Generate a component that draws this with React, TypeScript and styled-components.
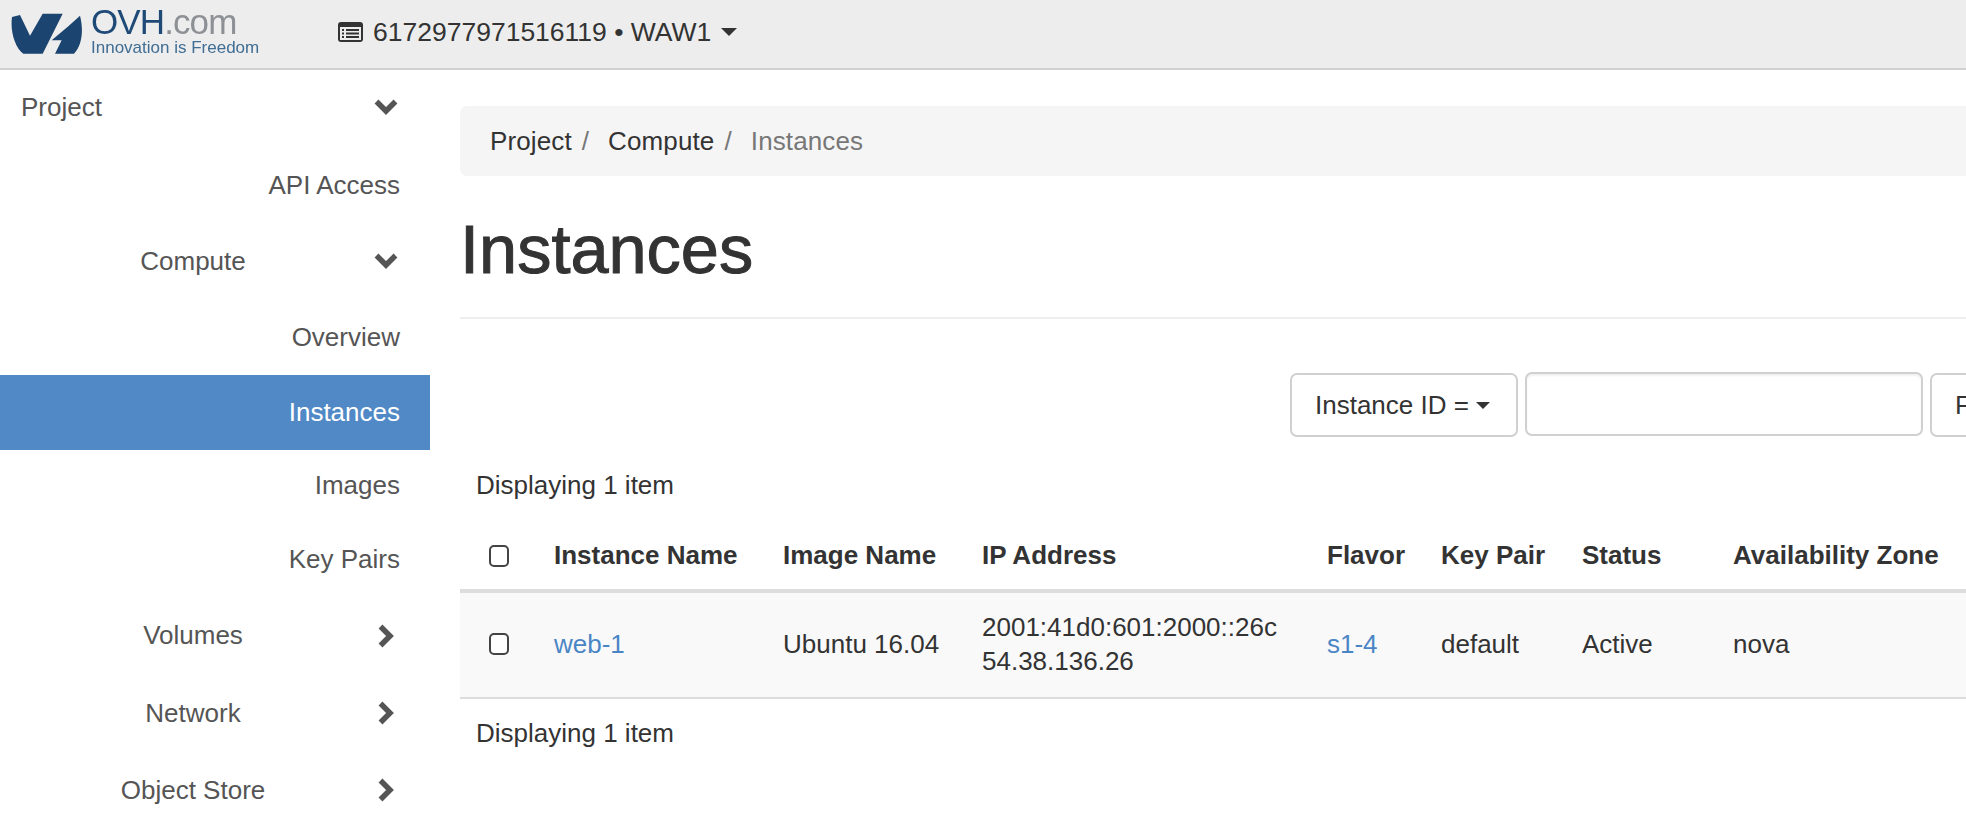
import { createGlobalStyle, styled } from 'styled-components'

const GlobalStyle = createGlobalStyle`
  html, body {
    margin: 0;
    padding: 0;
    background: #fff;
    overflow: hidden;
  }
  body {
    font-family: "Liberation Sans", Arial, sans-serif;
    font-size: 26px;
    color: #333;
  }
`

const Page = styled.div`
  width: 1966px;
  height: 828px;
  overflow: hidden;
`

const Topbar = styled.header`
  display: flex;
  align-items: center;
  height: 68px;
  background: #ededed;
  border-bottom: 2px solid #d0d0d0;
`

const Brand = styled.div`
  display: flex;
  align-items: center;
  gap: 8px;
  width: 338px;
  padding-left: 11px;
  box-sizing: border-box;
  filter: blur(0.5px);
`

const BrandText = styled.div`
  display: flex;
  flex-direction: column;
  gap: 2px;
  padding-bottom: 5px;
`

const BrandName = styled.span`
  font-size: 35px;
  line-height: 30px;
  letter-spacing: -0.9px;
  color: #8d9196;

  b {
    font-weight: 400;
    color: #1f4a78;
  }
`

const BrandTagline = styled.span`
  font-size: 17px;
  line-height: 18px;
  color: #3f6d94;
`

const ProjectPicker = styled.div`
  display: flex;
  align-items: center;
  gap: 10px;
  padding-bottom: 4px;
  font-size: 26.5px;
  color: #333;
  white-space: nowrap;
`

const Caret = styled.span<{ $size: number }>`
  display: inline-block;
  border-top: ${(p) => p.$size}px solid #333;
  border-left: ${(p) => p.$size}px solid transparent;
  border-right: ${(p) => p.$size}px solid transparent;
`

const Body = styled.div`
  display: flex;
`

const Sidebar = styled.nav`
  flex: 0 0 430px;
  display: flex;
  flex-direction: column;
`

const NavRow = styled.div<{ $height: number; $active?: boolean; $pushDown?: number }>`
  display: flex;
  align-items: center;
  justify-content: flex-end;
  box-sizing: border-box;
  height: ${(p) => p.$height}px;
  padding-top: ${(p) => p.$pushDown ?? 0}px;
  padding-right: 30px;
  color: ${(p) => (p.$active ? '#fff' : '#555')};
  background: ${(p) => (p.$active ? '#5089c6' : 'transparent')};
`

const NavGroup = styled(NavRow)`
  justify-content: flex-start;
  padding-right: 0;
`

const NavGroupLabel = styled.span`
  flex: 0 0 374px;
  box-sizing: border-box;
  padding-left: 12px;
  text-align: center;
`

const NavRootLabel = styled.span`
  flex: 0 0 374px;
  box-sizing: border-box;
  padding-left: 21px;
`

const NavIcon = styled.i`
  display: flex;
  justify-content: center;
  flex: 0 0 24px;
`

const Main = styled.main`
  flex: 0 0 1700px;
  box-sizing: border-box;
  padding: 36px 0 0 30px;
`

const Breadcrumb = styled.ol`
  display: flex;
  align-items: center;
  height: 70px;
  margin: 0;
  padding: 0 0 0 30px;
  list-style: none;
  background: #f5f5f5;
  border-radius: 7px;
`

const Crumb = styled.li<{ $current?: boolean }>`
  color: ${(p) => (p.$current ? '#777' : '#333')};
  letter-spacing: 0.12px;

  &:not(:last-child)::after {
    content: '/';
    color: #777;
    padding: 0 19px 0 10px;
  }
`

const Title = styled.h1`
  margin: 0;
  padding: 37px 0 33px 0;
  height: 143px;
  box-sizing: border-box;
  font-size: 68.5px;
  line-height: 73px;
  font-weight: 400;
  color: #333;
  -webkit-text-stroke: 1px #333;
  border-bottom: 2px solid #eee;
`

const FilterBar = styled.div`
  display: flex;
  align-items: center;
  gap: 7px;
  padding: 54px 0 0 830px;
`

const FilterButton = styled.div`
  display: flex;
  align-items: center;
  gap: 7px;
  flex: none;
  box-sizing: border-box;
  height: 64px;
  padding: 0 26px 0 23px;
  background: #fff;
  border: 2px solid #d0d0d0;
  border-radius: 7px;
  color: #333;
  white-space: nowrap;
`

const FilterInput = styled.input`
  flex: none;
  box-sizing: border-box;
  width: 398px;
  height: 64px;
  margin: -3px 0 0;
  padding: 0;
  background: #fff;
  border: 2px solid #d0d0d0;
  border-radius: 7px;
  box-shadow: inset 0 2px 2px rgba(0, 0, 0, 0.06);
`

const ItemCount = styled.div<{ $top: number }>`
  margin-top: ${(p) => p.$top}px;
  padding: 0 16px;
  line-height: 37px;
`

const Table = styled.table`
  width: 100%;
  table-layout: fixed;
  border-collapse: collapse;
`

const HeadCell = styled.th<{ $width?: number }>`
  box-sizing: border-box;
  width: ${(p) => (p.$width ? `${p.$width}px` : 'auto')};
  height: 87px;
  padding: 18px 16px 0;
  text-align: left;
  font-weight: 700;
  color: #333;
  white-space: nowrap;
  border-bottom: 4px solid #ddd;
`

const Row = styled.tr`
  background: #f9f9f9;
`

const Cell = styled.td`
  box-sizing: border-box;
  height: 107px;
  padding: 0 16px 2px;
  line-height: 34px;
  white-space: nowrap;
  border-bottom: 2px solid #ddd;
`

const Link = styled.a`
  color: #4a86c5;
  text-decoration: none;
`

const Checkbox = styled.span`
  display: block;
  box-sizing: border-box;
  width: 20px;
  height: 22px;
  margin-left: 13px;
  background: #fff;
  border: 2px solid #444;
  border-radius: 5px;
`

const LogoMark = () => (
  <svg width="72" height="42" viewBox="33 36 216 126">
    <path
      fill="#1b4470"
      d="M36 48 L60 42 L90 104 L128 38 H188 L128 158 H70 C45 140 30 90 36 48 Z"
    />
    <path
      fill="#1b4470"
      d="M240 44 C252 90 245 135 222 158 H165 L185 118 H155 L205 76 Z"
    />
  </svg>
)

const ListIcon = () => (
  <svg width="25" height="20" viewBox="0 0 25 20">
    <rect width="25" height="20" rx="3" fill="#333" />
    <rect x="2" y="5" width="21" height="13" fill="#ededed" />
    <path
      fill="#333"
      d="M4 7h2v2H4zM8 7h13v2H8zM4 10.500h2v2H4zM8 10.500h13v2H8zM4 14h2v2H4zM8 14h13v2H8z"
    />
  </svg>
)

const ChevronDown = () => (
  <svg width="24" height="16" viewBox="0 0 24 16">
    <polyline points="2.500,2.500 12,12 21.500,2.500" fill="none" stroke="#555" strokeWidth="5.500" />
  </svg>
)

const ChevronRight = () => (
  <svg width="16" height="24" viewBox="0 0 16 24">
    <polyline points="2.500,2.500 12,12 2.500,21.500" fill="none" stroke="#555" strokeWidth="5.500" />
  </svg>
)

export default function App() {
  return (
    <Page>
      <GlobalStyle />
      <Topbar>
        <Brand>
          <LogoMark />
          <BrandText>
            <BrandName>
              <b>OVH</b>.com
            </BrandName>
            <BrandTagline>Innovation is Freedom</BrandTagline>
          </BrandText>
        </Brand>
        <ProjectPicker>
          <ListIcon />
          6172977971516119 • WAW1
          <Caret $size={8} />
        </ProjectPicker>
      </Topbar>
      <Body>
        <Sidebar>
          <NavGroup $height={74}>
            <NavRootLabel>Project</NavRootLabel>
            <NavIcon>
              <ChevronDown />
            </NavIcon>
          </NavGroup>
          <NavRow $height={83}>API Access</NavRow>
          <NavGroup $height={68}>
            <NavGroupLabel>Compute</NavGroupLabel>
            <NavIcon>
              <ChevronDown />
            </NavIcon>
          </NavGroup>
          <NavRow $height={80} $pushDown={5}>
            Overview
          </NavRow>
          <NavRow $height={75} $active>
            Instances
          </NavRow>
          <NavRow $height={71}>Images</NavRow>
          <NavRow $height={76}>Key Pairs</NavRow>
          <NavGroup $height={77}>
            <NavGroupLabel>Volumes</NavGroupLabel>
            <NavIcon>
              <ChevronRight />
            </NavIcon>
          </NavGroup>
          <NavGroup $height={78}>
            <NavGroupLabel>Network</NavGroupLabel>
            <NavIcon>
              <ChevronRight />
            </NavIcon>
          </NavGroup>
          <NavGroup $height={76}>
            <NavGroupLabel>Object Store</NavGroupLabel>
            <NavIcon>
              <ChevronRight />
            </NavIcon>
          </NavGroup>
        </Sidebar>
        <Main>
          <Breadcrumb>
            <Crumb>Project</Crumb>
            <Crumb>Compute</Crumb>
            <Crumb $current>Instances</Crumb>
          </Breadcrumb>
          <Title>Instances</Title>
          <FilterBar>
            <FilterButton>
              Instance ID =
              <Caret $size={7} />
            </FilterButton>
            <FilterInput />
            <FilterButton>Filter</FilterButton>
          </FilterBar>
          <ItemCount $top={30}>Displaying 1 item</ItemCount>
          <Table>
            <thead>
              <tr>
                <HeadCell $width={78}>
                  <Checkbox />
                </HeadCell>
                <HeadCell $width={229}>Instance Name</HeadCell>
                <HeadCell $width={199}>Image Name</HeadCell>
                <HeadCell $width={345}>IP Address</HeadCell>
                <HeadCell $width={114}>Flavor</HeadCell>
                <HeadCell $width={141}>Key Pair</HeadCell>
                <HeadCell $width={151}>Status</HeadCell>
                <HeadCell>Availability Zone</HeadCell>
              </tr>
            </thead>
            <tbody>
              <Row>
                <Cell>
                  <Checkbox />
                </Cell>
                <Cell>
                  <Link>web-1</Link>
                </Cell>
                <Cell>Ubuntu 16.04</Cell>
                <Cell>
                  2001:41d0:601:2000::26c
                  <br />
                  54.38.136.26
                </Cell>
                <Cell>
                  <Link>s1-4</Link>
                </Cell>
                <Cell>default</Cell>
                <Cell>Active</Cell>
                <Cell>nova</Cell>
              </Row>
            </tbody>
          </Table>
          <ItemCount $top={16}>Displaying 1 item</ItemCount>
        </Main>
      </Body>
    </Page>
  )
}
